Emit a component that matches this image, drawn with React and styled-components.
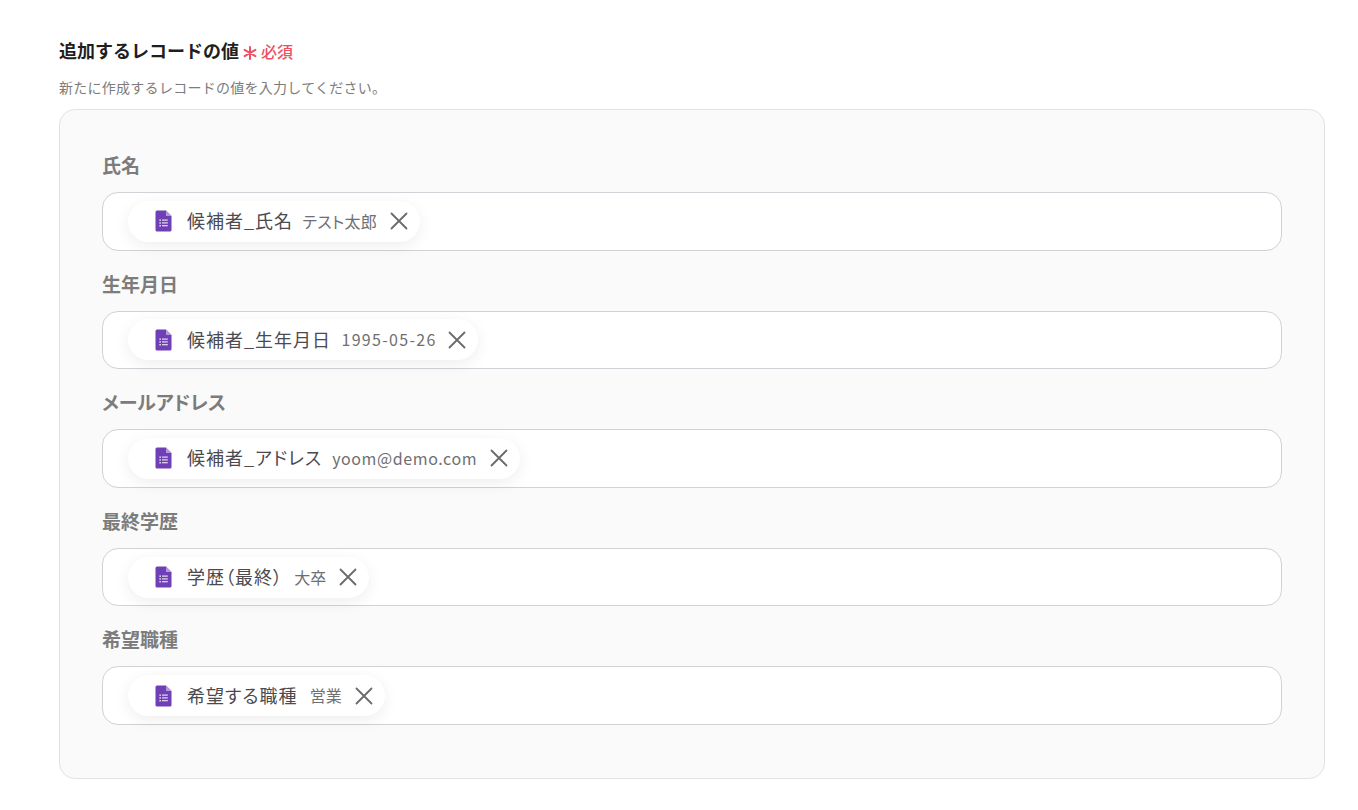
import React from "react";
import styled, { createGlobalStyle } from "styled-components";

const Global = createGlobalStyle`
  html, body { margin: 0; padding: 0; background: #fff; }
  body { font-family: "Noto Sans CJK JP", "Noto Sans", sans-serif; }
`;

const Page = styled.main`
  width: 1358px;
  height: 810px;
  box-sizing: border-box;
  padding: 36px 33px 0 59px;
  overflow: hidden;
`;

const TitleRow = styled.div`
  display: flex;
  align-items: center;
  height: 28px;
`;

const Title = styled.h2`
  margin: 0;
  font-size: 18px;
  line-height: 28px;
  font-weight: 700;
  color: #1f1f1f;
`;

const Asterisk = styled.svg`
  width: 14px;
  height: 14px;
  margin: 6px 4px 0 4px;
  flex: none;
`;

const Required = styled.span`
  margin-top: 2px;
  font-size: 16px;
  line-height: 28px;
  font-weight: 500;
  color: #ec5062;
`;

const Hint = styled.p`
  margin: 13px 0 0;
  font-size: 14px;
  line-height: 20px;
  letter-spacing: 0.27px;
  color: #7c7c7c;
`;

const Panel = styled.section`
  box-sizing: border-box;
  margin-top: 12px;
  height: 670px;
  padding: 41px 42px 0;
  background: #fafafa;
  border: 1px solid #e2e2e4;
  border-radius: 16px;
  display: flex;
  flex-direction: column;
  gap: 19.1px;
`;

const Field = styled.div`
  display: flex;
  flex-direction: column;
  gap: 13px;
`;

const Label = styled.label`
  font-size: 19px;
  line-height: 28px;
  font-weight: 700;
  font-feature-settings: "palt";
  color: #7c7c7c;
`;

const InputBox = styled.div`
  box-sizing: border-box;
  height: 58.5px;
  display: flex;
  align-items: center;
  padding: 0 25px;
  background: #fff;
  border: 1px solid #cfd2d6;
  border-radius: 16px;
`;

const Chip = styled.div`
  display: flex;
  align-items: center;
  height: 41px;
  padding: 0 12px 0 27px;
  background: #fff;
  border-radius: 21px;
  box-shadow: 0 4px 16px rgba(0, 0, 0, 0.07);
`;

const FormIcon = styled.svg`
  width: 17px;
  height: 22px;
  flex: none;
  margin-right: 15px;
`;

const ChipName = styled.span`
  padding-bottom: 2px;
  font-size: 18px;
  line-height: 28px;
  letter-spacing: 1px;
  font-feature-settings: "palt";
  color: #4a4a4f;
  white-space: nowrap;
`;

const ChipValue = styled.span`
  margin-left: ${(p) => p.$gap}px;
  margin-right: ${(p) => -(p.$spacing || 0)}px;
  padding-bottom: 1px;
  font-size: 16px;
  line-height: 22px;
  letter-spacing: ${(p) => p.$spacing || 0}px;
  font-feature-settings: "palt";
  color: #6f6f73;
  white-space: nowrap;
`;

const Remove = styled.svg`
  width: 18px;
  height: 18px;
  margin-left: 13px;
  flex: none;
`;

const fields = [
  { label: "氏名", name: "候補者_氏名", value: "テスト太郎", gap: 9.3, spacing: 0.3 },
  { label: "生年月日", name: "候補者_生年月日", value: "1995-05-26", gap: 10.4, spacing: 1.3 },
  { label: "メールアドレス", name: "候補者_アドレス", value: "yoom@demo.com", gap: 10, spacing: 0.6 },
  { label: "最終学歴", name: "学歴（最終）", value: "大卒", gap: 11.3 },
  { label: "希望職種", name: "希望する職種", value: "営業", gap: 12.3 },
];

function GoogleForm() {
  return (
    <FormIcon viewBox="0 0 17 22" aria-hidden="true">
      <path d="M2 0.5H11L16.5 6V20a1.6 1.6 0 0 1-1.6 1.6H2A1.6 1.6 0 0 1 .5 20V2A1.6 1.6 0 0 1 2 .5Z" fill="#6f3fb5" />
      <path d="M11 .5V6H16.5Z" fill="#b79ad9" />
      <g fill="#e6dcf3">
        <rect x="4.4" y="9.4" width="1.5" height="1.5" />
        <rect x="4.4" y="12.2" width="1.5" height="1.5" />
        <rect x="4.4" y="15" width="1.5" height="1.5" />
        <rect x="7" y="9.5" width="5.8" height="1.2" />
        <rect x="7" y="12.3" width="5.8" height="1.2" />
        <rect x="7" y="15.1" width="5.8" height="1.2" />
      </g>
    </FormIcon>
  );
}

export default function App() {
  return (
    <Page>
      <Global />
      <TitleRow>
        <Title>追加するレコードの値</Title>
        <Asterisk viewBox="0 0 14 14" aria-hidden="true">
          <path d="M7 1V13M1.6 3.9L12.4 10.1M12.4 3.9L1.6 10.1" stroke="#ec5062" strokeWidth="2" strokeLinecap="round" />
        </Asterisk>
        <Required>必須</Required>
      </TitleRow>
      <Hint>新たに作成するレコードの値を入力してください。</Hint>
      <Panel>
        {fields.map((f) => (
          <Field key={f.label}>
            <Label>{f.label}</Label>
            <InputBox>
              <Chip>
                <GoogleForm />
                <ChipName>{f.name}</ChipName>
                <ChipValue $gap={f.gap} $spacing={f.spacing}>{f.value}</ChipValue>
                <Remove viewBox="0 0 18 18" aria-hidden="true">
                  <path d="M1.5 1.5L16.5 16.5M16.5 1.5L1.5 16.5" stroke="#6a6a6d" strokeWidth="1.8" strokeLinecap="round" />
                </Remove>
              </Chip>
            </InputBox>
          </Field>
        ))}
      </Panel>
    </Page>
  );
}
